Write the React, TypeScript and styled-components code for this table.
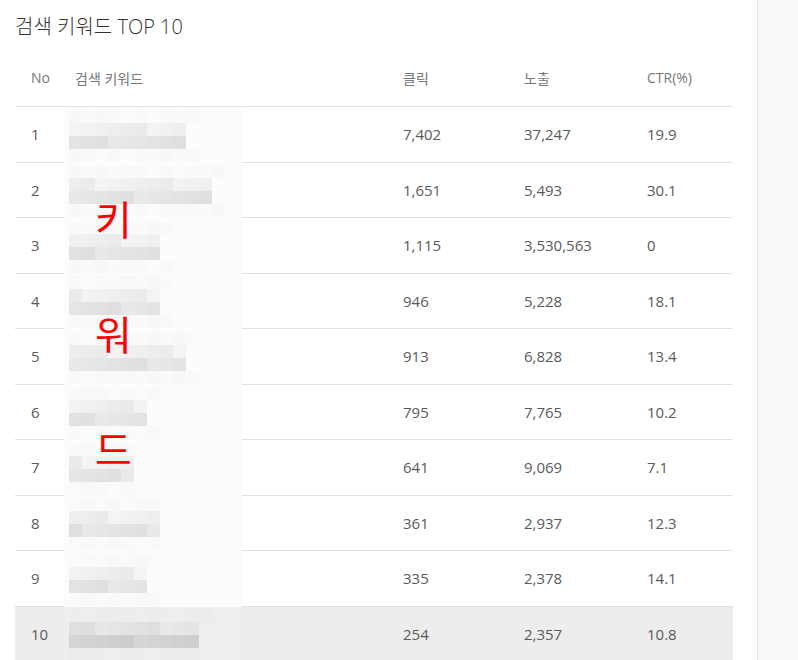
import React from 'react';
import styled, { createGlobalStyle } from 'styled-components';

interface KeywordRow {
  no: number;
  clicks: string;
  impressions: string;
  ctr: string;
  blocks: number;
}

const rows: KeywordRow[] = [
  { no: 1, clicks: '7,402', impressions: '37,247', ctr: '19.9', blocks: 9 },
  { no: 2, clicks: '1,651', impressions: '5,493', ctr: '30.1', blocks: 11 },
  { no: 3, clicks: '1,115', impressions: '3,530,563', ctr: '0', blocks: 7 },
  { no: 4, clicks: '946', impressions: '5,228', ctr: '18.1', blocks: 7 },
  { no: 5, clicks: '913', impressions: '6,828', ctr: '13.4', blocks: 9 },
  { no: 6, clicks: '795', impressions: '7,765', ctr: '10.2', blocks: 6 },
  { no: 7, clicks: '641', impressions: '9,069', ctr: '7.1', blocks: 5 },
  { no: 8, clicks: '361', impressions: '2,937', ctr: '12.3', blocks: 7 },
  { no: 9, clicks: '335', impressions: '2,378', ctr: '14.1', blocks: 6 },
  { no: 10, clicks: '254', impressions: '2,357', ctr: '10.8', blocks: 10 },
];

// pseudo-random grey for the pixelated keyword
const shade = (row: number, line: number, col: number, dark: boolean) => {
  const n = (row * 37 + line * 17 + col * 53) % 11;
  if (line === 0 || line === 3) {
    const l = dark ? 236 + (n % 3) : 248 + (n % 4);
    return `rgb(${l},${l},${l})`;
  }
  const base = dark ? (line === 1 ? 222 : 205) : line === 1 ? 234 : 223;
  const v = base + n;
  return `rgb(${v},${v},${v + 1})`;
};

const Mosaic = ({ row, blocks, dark }: { row: number; blocks: number; dark: boolean }) => (
  <MosaicBox $dark={dark}>
    {[0, 1, 2, 3].map((line) => (
      <BlockRow key={line}>
        {Array.from({ length: line === 0 || line === 3 ? blocks + 1 : blocks }).map((_, col) => (
          <Block key={col} $shade={shade(row, line, col, dark)} />
        ))}
      </BlockRow>
    ))}
  </MosaicBox>
);

export default function App() {
  return (
    <>
      <GlobalStyle />
      <Page>
        <Main>
          <Title>검색 키워드 TOP 10</Title>
          <Table>
            <HeadRow>
              <NoCell>No</NoCell>
              <div>검색 키워드</div>
              <div>클릭</div>
              <div>노출</div>
              <div>CTR(%)</div>
            </HeadRow>
            {rows.map((r) => (
              <Row key={r.no} $highlight={r.no === 10}>
                <NoCell>{r.no}</NoCell>
                <KeywordCell>
                  <Mosaic row={r.no} blocks={r.blocks} dark={r.no === 10} />
                </KeywordCell>
                <div>{r.clicks}</div>
                <div>{r.impressions}</div>
                <div>{r.ctr}</div>
              </Row>
            ))}
            <Stamp>
              <span>키</span>
              <span>워</span>
              <span>드</span>
            </Stamp>
          </Table>
        </Main>
        <Side />
      </Page>
    </>
  );
}

const GlobalStyle = createGlobalStyle`
  html, body {
    margin: 0;
    padding: 0;
    background: #fff;
  }
  body {
    font-family: 'Open Sans', 'Noto Sans CJK KR', sans-serif;
  }
`;

const Page = styled.div`
  display: flex;
  min-height: 660px;
`;

const Main = styled.div`
  width: 757px;
  box-sizing: border-box;
  padding: 13px 24px 0 15px;
`;

const Side = styled.div`
  flex: 1;
  border-left: 1px solid #e3e3e3;
  background: #f9f9f9;
`;

const Title = styled.h2`
  margin: 0;
  font-size: 20px;
  font-weight: 300;
  line-height: 28px;
  color: #333;
`;

const Table = styled.div`
  position: relative;
`;

const gridColumns = '60px 328px 121px 123px 1fr';

const HeadRow = styled.div`
  display: grid;
  grid-template-columns: ${gridColumns};
  align-items: center;
  height: 66px;
  padding-top: 8px;
  box-sizing: border-box;
  border-bottom: 1px solid #e2e2e2;
  font-size: 14px;
  color: #777;
`;

const Row = styled.div<{ $highlight?: boolean }>`
  display: grid;
  grid-template-columns: ${gridColumns};
  align-items: center;
  height: 55.5px;
  box-sizing: border-box;
  border-bottom: 1px solid #e2e2e2;
  background: ${({ $highlight }) => ($highlight ? '#ededed' : 'transparent')};
  font-size: 15px;
  color: #5a5a5a;
`;

const NoCell = styled.div`
  padding-left: 16px;
`;

const KeywordCell = styled.div`
  position: relative;
  align-self: stretch;
`;

const MosaicBox = styled.div<{ $dark: boolean }>`
  position: absolute;
  left: -11px;
  top: 0;
  bottom: -1px;
  width: 178px;
  padding: 2px 0 0 5px;
  box-sizing: border-box;
  display: flex;
  flex-direction: column;
  justify-content: center;
  background: ${({ $dark }) => ($dark ? '#eeeeee' : '#fcfcfc')};
`;

const BlockRow = styled.div`
  display: flex;
  height: 13px;
`;

const Block = styled.div<{ $shade: string }>`
  width: 13px;
  height: 13px;
  background: ${({ $shade }) => $shade};
`;

const Stamp = styled.div`
  position: absolute;
  left: 80px;
  top: 157px;
  display: flex;
  flex-direction: column;
  gap: 75px;
  font-family: 'Noto Sans CJK KR', sans-serif;
  font-size: 40px;
  line-height: 40px;
  color: #ff0000;
  pointer-events: none;
`;
